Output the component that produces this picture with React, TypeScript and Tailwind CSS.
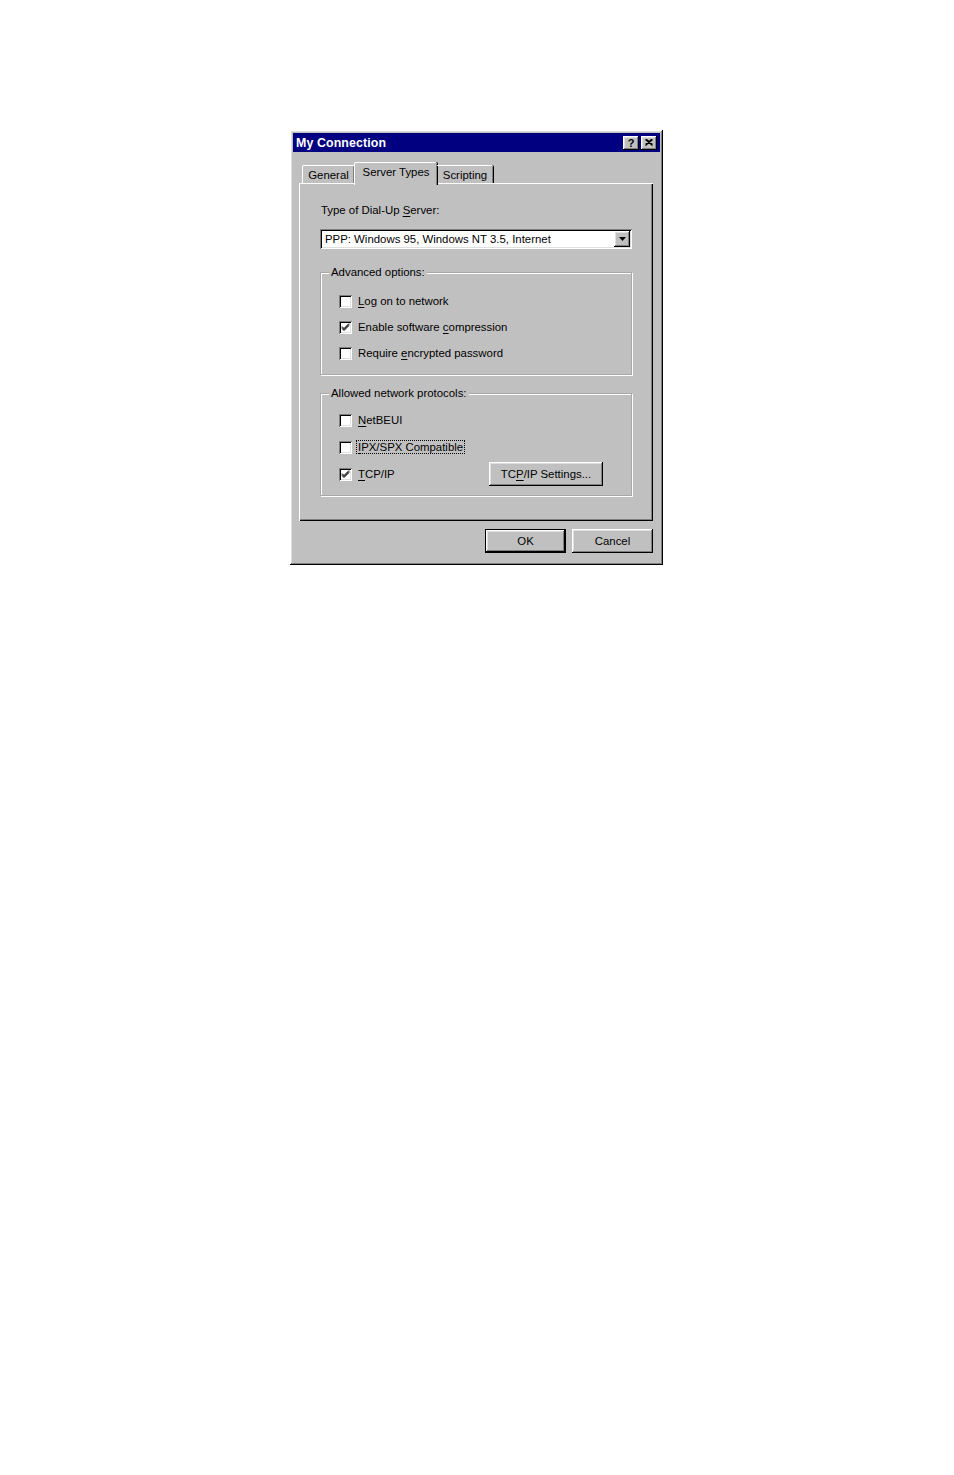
import React from "react";

const raised =
  "shadow-[inset_-1px_-1px_0_#000,inset_1px_1px_0_#fff,inset_-2px_-2px_0_#808080,inset_2px_2px_0_#dfdfdf]";
const sunken =
  "shadow-[inset_1px_1px_0_#808080,inset_-1px_-1px_0_#fff,inset_2px_2px_0_#000,inset_-2px_-2px_0_#dfdfdf]";

function U({ children }: { children: React.ReactNode }) {
  return <span className="underline underline-offset-[2px] decoration-[1px]">{children}</span>;
}

function Check({ checked }: { checked?: boolean }) {
  return (
    <div className={`w-[13px] h-[13px] bg-white shrink-0 ${sunken} flex items-center justify-center`}>
      {checked && (
        <svg width="13" height="13" viewBox="0 0 13 13">
          <path d="M3 5.5 L5 7.5 L10 2.5 M3 6.5 L5 8.5 L10 3.5 M3 7.5 L5 9.5 L10 4.5" stroke="#000" strokeWidth="1" fill="none" />
        </svg>
      )}
    </div>
  );
}

function Row({ checked, children }: { checked?: boolean; children: React.ReactNode }) {
  return (
    <div className="flex items-center h-[14px]">
      <Check checked={checked} />
      <div className="ml-[6px] leading-[14px]">{children}</div>
    </div>
  );
}

function Group({ title, height, children }: { title: string; height: number; children: React.ReactNode }) {
  return (
    <div
      className={`relative w-[312px] border border-[#a8a8a8] shadow-[1px_1px_0_#fff,inset_1px_1px_0_#fff]`}
      style={{ height }}
    >
      <div className="absolute left-[8px] top-[-8px] bg-[#c0c0c0] px-[2px] leading-[14px]">{title}</div>
      {children}
    </div>
  );
}

function Button({ children, def, className }: { children: React.ReactNode; def?: boolean; className?: string }) {
  return (
    <div
      className={`h-[24px] flex items-center justify-center bg-[#c0c0c0] ${
        def
          ? "shadow-[inset_0_0_0_1px_#000,inset_-2px_-2px_0_#000,inset_2px_2px_0_#fff,inset_-3px_-3px_0_#808080,inset_3px_3px_0_#dfdfdf]"
          : raised
      } ${className ?? ""}`}
    >
      {children}
    </div>
  );
}

export default function App() {
  return (
    <div className="min-h-[1475px] w-[954px] bg-white pt-[130px] pl-[290px] font-['Liberation_Sans',Arial,sans-serif] text-[11.4px] text-black">
      <div className={`w-[373px] h-[435px] bg-[#c0c0c0] p-[3px] flex flex-col ${raised}`}>
        {/* title bar */}
        <div className="h-[19px] bg-[#000080] flex items-center pl-[3px] pr-[3px]">
          <div className="text-white font-bold text-[12.4px] leading-[19px] mt-[1px] tracking-[0.1px]">My Connection</div>
          <div className="ml-auto flex gap-[2px]">
            <div className={`w-[16px] h-[14px] bg-[#c0c0c0] ${raised} flex items-center justify-center`}>
              <span className="font-bold text-[11px] leading-[11px] mt-[1px]">?</span>
            </div>
            <div className={`w-[16px] h-[14px] bg-[#c0c0c0] ${raised} flex items-center justify-center`}>
              <svg width="8" height="7" viewBox="0 0 8 7">
                <path d="M0.5 0.5 L7.5 6.5 M7.5 0.5 L0.5 6.5 M1.5 0.5 L7.5 5.5 M6.5 0.5 L0.5 5.5" stroke="#000" strokeWidth="1.2" fill="none" />
              </svg>
            </div>
          </div>
        </div>

        {/* tabs */}
        <div className="ml-[6px] mt-[10px] h-[21px] flex items-end pl-[3px] relative z-10">
          <div className="h-[18px] w-[52px] border-l border-t border-white rounded-tl-[2px] flex items-center justify-center shadow-[inset_-1px_0_0_#808080]">
            <span className="leading-[14px] mt-[1px]">General</span>
          </div>
          <div className="h-[23px] mb-[-2px] w-[83px] bg-[#c0c0c0] border-l border-t border-white rounded-tl-[2px] rounded-tr-[2px] flex items-start justify-center pt-[2px] shadow-[inset_-1px_0_0_#808080,1px_0_0_#000]">
            <span className="leading-[14px]">Server Types</span>
          </div>
          <div className="h-[18px] w-[56px] border-t border-white rounded-tr-[2px] flex items-center justify-center shadow-[inset_-1px_0_0_#808080,1px_0_0_#000]">
            <span className="leading-[14px] mt-[1px]">Scripting</span>
          </div>
        </div>

        {/* panel */}
        <div className="ml-[6px] w-[354px] h-[338px] shadow-[inset_1px_1px_0_#fff,inset_-1px_-1px_0_#000,inset_-2px_-2px_0_#808080] pl-[21px] pt-[20px]">
          <div className="ml-[1px] leading-[14px]">
            Type of Dial-Up <U>S</U>erver:
          </div>
          <div className={`mt-[12px] w-[312px] h-[20px] bg-white ${sunken} flex items-center pl-[5px] pr-[2px]`}>
            <span className="leading-[14px]">PPP: Windows 95, Windows NT 3.5, Internet</span>
            <div className={`ml-auto w-[16px] h-[16px] bg-[#c0c0c0] ${raised} flex items-center justify-center`}>
              <svg width="7" height="4" viewBox="0 0 7 4">
                <path d="M0 0 H7 L3.5 4 Z" fill="#000" />
              </svg>
            </div>
          </div>

          <div className="mt-[23px]">
            <Group title="Advanced options:" height={103}>
              <div className="pl-[18px] pt-[21px] flex flex-col gap-[12px]">
                <Row>
                  <U>L</U>og on to network
                </Row>
                <Row checked>
                  Enable software <U>c</U>ompression
                </Row>
                <Row>
                  Require <U>e</U>ncrypted password
                </Row>
              </div>
            </Group>
          </div>

          <div className="mt-[18px]">
            <Group title="Allowed network protocols:" height={103}>
              <div className="pl-[18px] pt-[19px] flex flex-col gap-[13px]">
                <Row>
                  <U>N</U>etBEUI
                </Row>
                <Row>
                  <span className="outline outline-1 outline-dotted outline-[#000] px-[1px] -ml-[1px]">
                    <U>I</U>PX/SPX Compatible
                  </span>
                </Row>
                <div className="flex items-center h-[14px]">
                  <Check checked />
                  <div className="ml-[6px] leading-[14px] w-[131px] shrink-0">
                    <U>T</U>CP/IP
                  </div>
                  <Button className="w-[114px]">
                    <span className="leading-[14px]">
                      TC<U>P</U>/IP Settings...
                    </span>
                  </Button>
                </div>
              </div>
            </Group>
          </div>
        </div>

        {/* bottom buttons */}
        <div className="ml-[6px] w-[354px] mt-[8px] flex justify-end gap-[6px]">
          <Button def className="w-[81px]">
            <span className="leading-[14px]">OK</span>
          </Button>
          <Button className="w-[81px]">
            <span className="leading-[14px]">Cancel</span>
          </Button>
        </div>
      </div>
    </div>
  );
}
